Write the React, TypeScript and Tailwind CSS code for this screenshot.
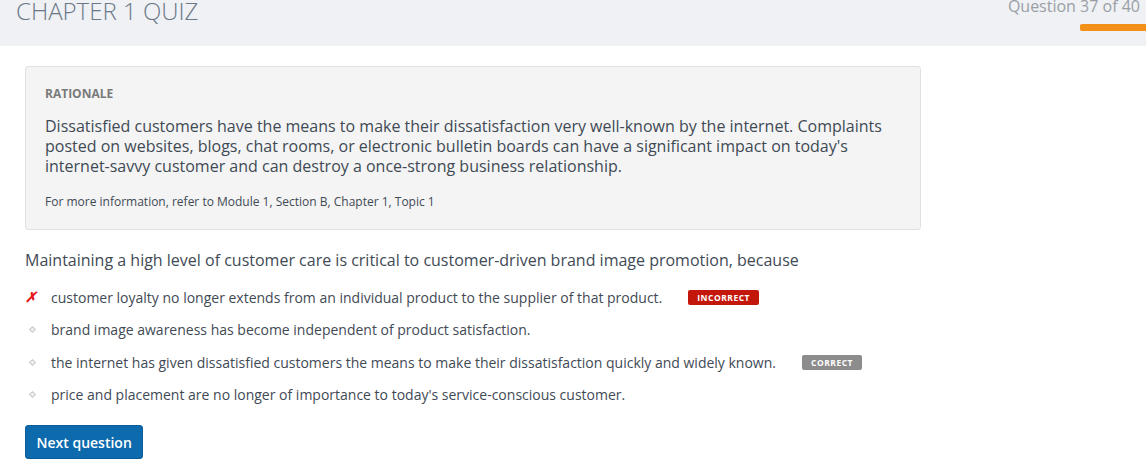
import React from "react";

type Choice = {
  text: string;
  status?: "incorrect" | "correct";
  picked?: boolean;
};

const choices: Choice[] = [
  {
    text: "customer loyalty no longer extends from an individual product to the supplier of that product.",
    status: "incorrect",
    picked: true,
  },
  { text: "brand image awareness has become independent of product satisfaction." },
  {
    text: "the internet has given dissatisfied customers the means to make their dissatisfaction quickly and widely known.",
    status: "correct",
  },
  { text: "price and placement are no longer of importance to today's service-conscious customer." },
];

const Bullet = ({ picked }: { picked?: boolean }) =>
  picked ? (
    <span className="w-[26px] text-[14px] font-bold italic leading-none text-[#e4151b]">✗</span>
  ) : (
    <span className="flex w-[26px] items-center pl-[5px]">
      <span className="block h-[5px] w-[5px] rotate-45 border border-[#c8c8c8] bg-[#f2f2f2]" />
    </span>
  );

const App = () => {
  return (
    <div className="h-[464px] w-[1146px] overflow-hidden bg-white font-['Open_Sans',sans-serif]">
      {/* header */}
      <div className="flex h-[46px] justify-between bg-[#eff1f4]">
        <h1 className="-mt-[7px] pl-[16px] text-[24px] font-light leading-[36px] text-[#6b7888]">
          CHAPTER 1 QUIZ
        </h1>
        <div className="-mt-[6px] flex flex-col items-end">
          <span className="pr-[6px] text-[16px] leading-[24px] text-[#9a9fa6]">Question 37 of 40</span>
          <span className="mt-[6px] h-[7px] w-[66px] rounded-l-[2px] bg-[#f39019]" />
        </div>
      </div>

      <div className="px-[25px] pt-[20px]">
        {/* rationale */}
        <div className="w-[896px] rounded-[3px] border border-[#e1e1e1] bg-[#f4f4f4] px-[19px] pt-[18px] pb-[18px]">
          <div className="text-[12px] font-bold leading-[18px] text-[#7a7a7a]">RATIONALE</div>
          <p className="mt-[13px] text-[16px] leading-[20px] text-[#3f4a55]">
            Dissatisfied customers have the means to make their dissatisfaction very well-known by the internet.
            Complaints posted on websites, blogs, chat rooms, or electronic bulletin boards can have a significant
            impact on today's internet-savvy customer and can destroy a once-strong business relationship.
          </p>
          <p className="mt-[17px] text-[12px] leading-[18px] text-[#3f4a55]">
            For more information, refer to Module 1, Section B, Chapter 1, Topic 1
          </p>
        </div>

        {/* question */}
        <p className="mt-[18px] text-[16px] leading-[24px] text-[#3f4a55]">
          Maintaining a high level of customer care is critical to customer-driven brand image promotion, because
        </p>

        <ul className="mt-[15px] flex flex-col gap-[12px]">
          {choices.map((c) => (
            <li key={c.text} className="flex h-[20.5px] items-center text-[14px] text-[#3f4a55]">
              <Bullet picked={c.picked} />
              <span>{c.text}</span>
              {c.status === "incorrect" && (
                <span className="ml-[26px] rounded-[2px] bg-[#c4170c] px-[9px] text-[8.5px] font-bold leading-[15px] tracking-[0.5px] text-white">
                  INCORRECT
                </span>
              )}
              {c.status === "correct" && (
                <span className="ml-[26px] rounded-[2px] bg-[#8c8c8c] px-[9px] text-[8.5px] font-bold leading-[15px] tracking-[0.5px] text-white">
                  CORRECT
                </span>
              )}
            </li>
          ))}
        </ul>

        <button className="mt-[20px] h-[34px] rounded-[3px] border border-[#0a5c98] bg-[#0d6aad] px-[10.5px] text-[14px] font-semibold text-white">
          Next question
        </button>
      </div>
    </div>
  );
};

export default App;
